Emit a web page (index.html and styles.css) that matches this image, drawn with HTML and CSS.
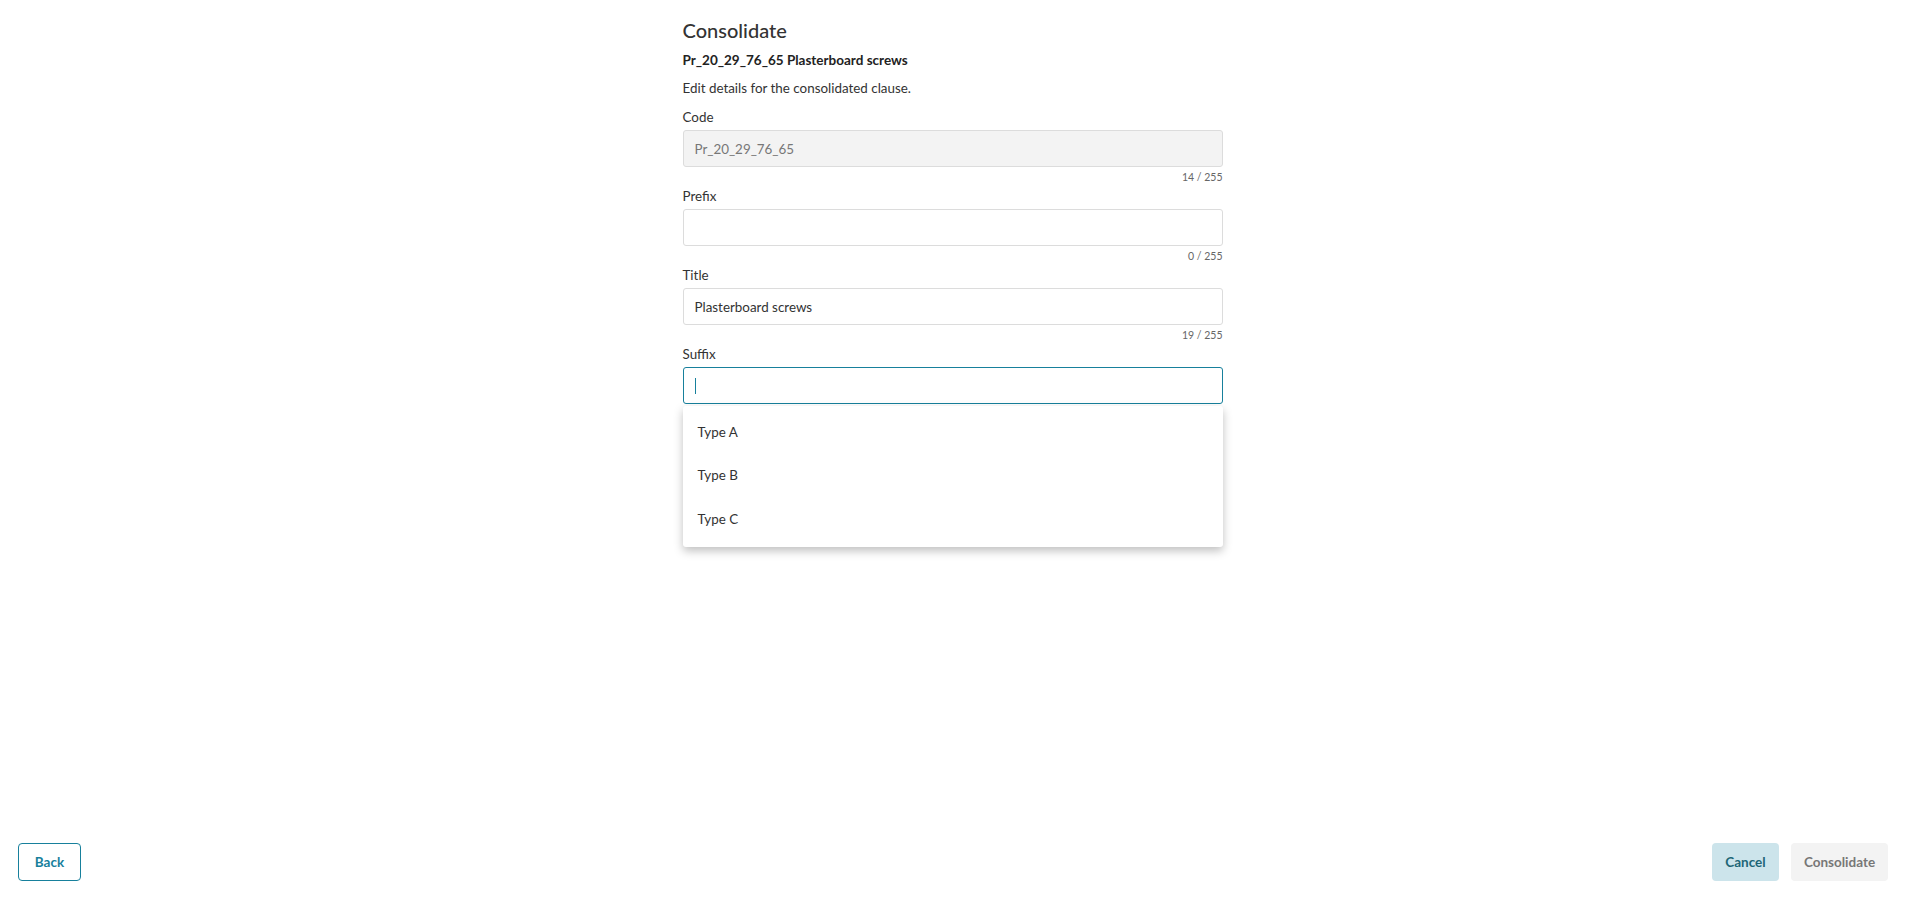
FILE: index.html
```html
<html lang="en">
<head>
  <meta charset="UTF-8" />
  <title>Consolidate</title>
  <link rel="stylesheet" href="styles.css">
</head>
<body>
  <div class="page">
    <div class="form-col">
      <h1>Consolidate</h1>
      <div class="subtitle">Pr_20_29_76_65 Plasterboard screws</div>
      <p class="intro">Edit details for the consolidated clause.</p>

      <div class="field">
        <label>Code</label>
        <div class="box disabled">Pr_20_29_76_65</div>
        <div class="count">14 / 255</div>
      </div>
      <div class="field">
        <label>Prefix</label>
        <div class="box"></div>
        <div class="count">0 / 255</div>
      </div>
      <div class="field">
        <label>Title</label>
        <div class="box">Plasterboard screws</div>
        <div class="count">19 / 255</div>
      </div>
      <div class="field">
        <label>Suffix</label>
        <div class="box focused"><span class="caret"></span></div>
        <ul class="menu">
          <li>Type A</li>
          <li>Type B</li>
          <li>Type C</li>
        </ul>
      </div>
    </div>

    <div class="footer">
      <button class="btn outline">Back</button>
      <div class="right">
        <button class="btn cancel">Cancel</button>
        <button class="btn muted">Consolidate</button>
      </div>
    </div>
  </div>
</body>
</html>
```

FILE: styles.css
```css
body { margin:0; background:#fff; font-family:Lato, "Open Sans", sans-serif; color:#333; }
.page { height:100vh; display:flex; flex-direction:column; }

.form-col { width:540px; margin-left:calc(50% - 272px); padding-top:18px; flex:1; }
h1 { margin:0; font-size:20px; line-height:24px; font-weight:500; color:#333; }
.subtitle { margin-top:10px; font-size:13.5px; line-height:16px; font-weight:700; color:#222; }
.intro { margin:12px 0 0; font-size:13.4px; line-height:16px; }

.field { position:relative; margin-top:13px; }
.field + .field { margin-top:4px; }
.field label { display:block; font-size:13.4px; line-height:16px; margin-bottom:5px; }
.box {
  height:37px; box-sizing:border-box; border:1px solid #dcdcdc; border-radius:3px;
  padding:0 11px; display:flex; align-items:center; font-size:13.4px; color:#333;
}
.box.disabled { background:#f3f3f3; color:#777; }
.box.focused { border-color:#17809c; }
.caret { width:1px; height:16px; background:#17809c; }
.count { text-align:right; font-size:10.5px; line-height:14px; color:#666; margin-top:3px; }

.menu {
  position:absolute; left:0; right:0; top:60px; margin:0; padding:4px 0 6px; list-style:none;
  background:#fff; border-radius:3px; box-shadow:0 4px 10px rgba(0,0,0,0.25);
}
.menu li { height:43.5px; display:flex; align-items:center; padding-left:15px; font-size:13.4px; }

.footer { display:flex; justify-content:space-between; align-items:center; padding:0 21px 21px 18px; }
.right { display:flex; gap:12px; }
.btn {
  height:38px; border-radius:4px; border:none; font-family:Lato, sans-serif; font-weight:700;
  font-size:13.5px; padding:0; cursor:pointer;
}
.btn.outline { background:#fff; border:1px solid #17809c; color:#17809c; width:63px; }
.btn.cancel { background:#cce4eb; color:#1d6677; width:67px; }
.btn.muted { background:#f3f3f3; color:#777; width:97px; }
```
